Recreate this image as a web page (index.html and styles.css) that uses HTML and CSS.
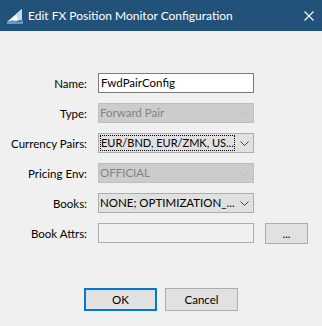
FILE: index.html
```html
<!DOCTYPE html>
<html lang="en">
<head>
  <meta charset="UTF-8">
  <title>Edit FX Position Monitor Configuration</title>
  <link rel="stylesheet" href="styles.css">
</head>
<body>
  <div class="window">
    <!-- Title bar -->
    <div class="titlebar">
      <svg class="app-icon" width="16" height="16" viewBox="0 0 16 16">
        <rect width="16" height="16" fill="#22517a"/>
        <polygon points="0,14 15,1 15,12 0,14" fill="#ffffff"/>
        <polygon points="9,6 15,1 15,12 11,12" fill="#c9d9e8"/>
        <path d="M0 14 Q5 11 9 13 T16 12 L16 16 L0 16 Z" fill="#5f9bd1"/>
      </svg>
      <span class="title">Edit FX Position Monitor Configuration</span>
      <svg class="close-icon" width="10" height="10" viewBox="0 0 10 10">
        <path d="M0.5 0.5 L9.5 9.5 M9.5 0.5 L0.5 9.5" stroke="#ffffff" stroke-width="1.1"/>
      </svg>
    </div>

    <!-- Form -->
    <div class="form">
      <label class="field-label">Name:</label>
      <div class="textbox">FwdPairConfig</div>
      <div></div>

      <label class="field-label">Type:</label>
      <div class="combo disabled">
        <span class="combo-text">Forward Pair</span>
        <span class="combo-arrow"><svg width="9" height="5" viewBox="0 0 9 5"><path d="M0.5 0.5 L4.5 4.5 L8.5 0.5" fill="none" stroke="#bfbfbf"/></svg></span>
      </div>
      <div></div>

      <label class="field-label">Currency Pairs:</label>
      <div class="combo">
        <span class="combo-text"><span class="focus">EUR/BND, EUR/ZMK, US...</span></span>
        <span class="combo-arrow"><svg width="9" height="5" viewBox="0 0 9 5"><path d="M0.5 0.5 L4.5 4.5 L8.5 0.5" fill="none" stroke="#404040"/></svg></span>
      </div>
      <div></div>

      <label class="field-label">Pricing Env:</label>
      <div class="combo disabled">
        <span class="combo-text">OFFICIAL</span>
        <span class="combo-arrow"><svg width="9" height="5" viewBox="0 0 9 5"><path d="M0.5 0.5 L4.5 4.5 L8.5 0.5" fill="none" stroke="#bfbfbf"/></svg></span>
      </div>
      <div></div>

      <label class="field-label">Books:</label>
      <div class="combo">
        <span class="combo-text">NONE; OPTIMIZATION_...</span>
        <span class="combo-arrow"><svg width="9" height="5" viewBox="0 0 9 5"><path d="M0.5 0.5 L4.5 4.5 L8.5 0.5" fill="none" stroke="#404040"/></svg></span>
      </div>
      <div></div>

      <label class="field-label">Book Attrs:</label>
      <div class="textbox readonly"></div>
      <button class="btn browse-btn">...</button>
    </div>

    <!-- Dialog buttons -->
    <div class="actions">
      <button class="btn default-btn">OK</button>
      <button class="btn">Cancel</button>
    </div>
  </div>
</body>
</html>
```

FILE: styles.css
```css
html, body {
  margin: 0;
  padding: 0;
}
body {
  width: 322px;
  height: 326px;
  background: #f0f0f0;
  font-family: Lato, "Noto Sans", sans-serif;
  font-size: 11.5px;
  color: #000;
  overflow: hidden;
}
.titlebar {
  height: 31px;
  background: #22517a;
  display: flex;
  align-items: center;
  padding: 0 8px 0 7px;
  color: #fff;
}
.app-icon {
  margin-right: 5px;
  margin-top: 1px;
}
.title {
  flex: 1;
  font-size: 12px;
}
.form {
  display: grid;
  grid-template-columns: 87px 156px 43px;
  grid-auto-rows: 20px;
  column-gap: 11px;
  row-gap: 10px;
  margin-top: 42px;
  align-items: center;
}
.field-label {
  text-align: right;
  white-space: nowrap;
}
.textbox {
  box-sizing: border-box;
  height: 20px;
  border: 1px solid #7a7a7a;
  background: #fff;
  padding: 0 2px;
  line-height: 18px;
}
.textbox.readonly {
  background: #f0f0f0;
  border-color: #adadad;
}
.combo {
  box-sizing: border-box;
  height: 20px;
  border: 1px solid #adadad;
  background: #e1e1e1;
  display: flex;
  align-items: center;
}
.combo.disabled {
  background: #cccccc;
  border-color: #bfbfbf;
  color: #838383;
}
.combo-text {
  flex: 1;
  min-width: 0;
  padding-left: 1px;
  white-space: nowrap;
  overflow: hidden;
  line-height: 16px;
}
.focus {
  display: inline-block;
  box-sizing: border-box;
  width: 135px;
  padding-left: 1px;
  font-size: 11px;
  outline: 1px dotted #000;
  outline-offset: -1px;
}
.combo-arrow {
  width: 18px;
  flex: none;
  display: flex;
  justify-content: center;
}
.btn {
  box-sizing: border-box;
  font-family: inherit;
  font-size: 11.5px;
  background: #e1e1e1;
  border: 1px solid #adadad;
  height: 21px;
  padding: 0;
  color: #000;
}
.browse-btn {
  width: 43px;
  margin-top: 1px;
}
.actions {
  display: flex;
  justify-content: center;
  gap: 8px;
  margin-top: 45px;
}
.actions .btn {
  width: 73px;
  height: 23px;
}
.default-btn {
  border: 2px solid #0078d7;
}
```
